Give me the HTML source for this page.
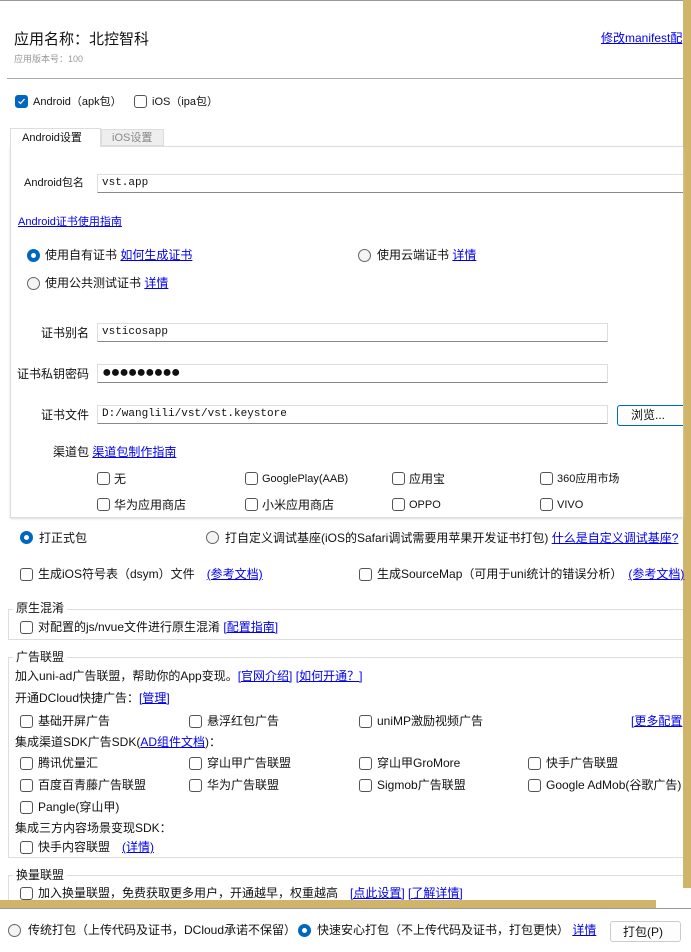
<!DOCTYPE html>
<html><head><meta charset="utf-8"><style>
*{margin:0;padding:0;box-sizing:border-box}
body{width:691px;height:952px;position:relative;overflow:hidden;background:#fff;font-family:"Liberation Sans","Noto Sans CJK SC",sans-serif;font-size:12px;color:#111}
.a{position:absolute;white-space:nowrap;line-height:14px}
a,.l{color:#0000ee;text-decoration:underline}
.cb{position:absolute;width:13px;height:13px;border:1px solid #555;border-radius:3px;background:#fff}
.cbc{background:#0067c0;border-color:#0067c0}
.rb{position:absolute;width:13px;height:13px;border:1px solid #666;border-radius:50%;background:#f4f4f4}
.rbc{border:4px solid #0067c0;background:#fff}
.in{position:absolute;height:19px;border:1px solid #ddd;border-bottom:1px solid #888;background:#fff;font-size:11px;padding-left:4px;line-height:17px;font-family:"Liberation Mono","Noto Sans CJK SC",monospace}
.fs{position:absolute;border:1px solid #ddd;border-right:none}
.lg{position:absolute;background:#fff;padding:0 3px;line-height:14px}
</style></head><body>
<div style="position:absolute;left:0;top:0;width:691px;height:1px;background:#999"></div>
<div style="position:absolute;left:683px;top:0;width:8px;height:888px;background:#d0b46a"></div>

<div class="a" style="left:14px;top:31px;font-size:15px;line-height:18px">应用名称：北控智科</div>
<div class="a" style="left:14px;top:52px;font-size:9px;color:#999">应用版本号：100</div>
<div class="a l" style="left:601px;top:31px;font-size:12px">修改manifest配</div>
<div style="position:absolute;left:7px;top:78px;width:676px;height:1px;background:#aaa"></div>

<div class="cb cbc" style="left:15px;top:95px"><svg width="11" height="11" style="position:absolute;left:0;top:0"><path d="M2.5 5.5l2 2 4-4.5" stroke="#fff" stroke-width="1.2" fill="none"/></svg></div>
<div class="a" style="left:33px;top:95px;font-size:11px">Android（apk包）</div>
<div class="cb" style="left:134px;top:95px"></div>
<div class="a" style="left:152px;top:95px;font-size:11px">iOS（ipa包）</div>

<div style="position:absolute;left:10px;top:128px;width:91px;height:19px;border:1px solid #ddd;border-bottom:none;background:#fff;z-index:2"></div>
<div class="a" style="left:22px;top:131px;z-index:3;font-size:11px">Android设置</div>
<div style="position:absolute;left:101px;top:129px;width:63px;height:17px;border:1px solid #ddd;background:#eee"></div>
<div class="a" style="left:112px;top:131px;color:#888;font-size:11px">iOS设置</div>
<div style="position:absolute;left:10px;top:146px;width:673px;height:372px;border:1px solid #ddd;border-right:none;box-shadow:0 1px 2px #ddd"></div>

<div class="a" style="left:24px;top:176px;font-size:11px">Android包名</div>
<div class="in" style="left:97px;top:174px;width:586px;border-right:none">vst.app</div>
<div class="a l" style="left:18px;top:215px;font-size:11px">Android证书使用指南</div>

<div class="rb rbc" style="left:27px;top:249px"></div>
<div class="a" style="left:45px;top:248px">使用自有证书 <a>如何生成证书</a></div>
<div class="rb" style="left:358px;top:249px"></div>
<div class="a" style="left:377px;top:248px">使用云端证书 <a>详情</a></div>
<div class="rb" style="left:27px;top:277px"></div>
<div class="a" style="left:45px;top:276px">使用公共测试证书 <a>详情</a></div>

<div class="a" style="left:41px;top:326px">证书别名</div>
<div class="in" style="left:97px;top:323px;width:511px">vsticosapp</div>
<div class="a" style="left:17px;top:367px">证书私钥密码</div>
<div class="in" style="left:97px;top:364px;width:511px;font-size:16px;line-height:17px;letter-spacing:-1px">●●●●●●●●●</div>
<div class="a" style="left:41px;top:408px">证书文件</div>
<div class="in" style="left:97px;top:405px;width:511px">D:/wanglili/vst/vst.keystore</div>
<div style="position:absolute;left:617px;top:405px;width:66px;height:21px;border:1px solid #0067c0;border-right:none;border-radius:3px 0 0 3px;background:#fdfdfd"></div>
<div class="a" style="left:631px;top:408px">浏览...</div>

<div class="a" style="left:53px;top:445px">渠道包 <a>渠道包制作指南</a></div>
<div class="cb" style="left:97px;top:472px"></div><div class="a" style="left:114px;top:472px">无</div>
<div class="cb" style="left:245px;top:472px"></div><div class="a" style="left:262px;top:472px;font-size:11px">GooglePlay(AAB)</div>
<div class="cb" style="left:392px;top:472px"></div><div class="a" style="left:409px;top:472px">应用宝</div>
<div class="cb" style="left:540px;top:472px"></div><div class="a" style="left:557px;top:472px;font-size:11px">360应用市场</div>
<div class="cb" style="left:97px;top:498px"></div><div class="a" style="left:114px;top:498px">华为应用商店</div>
<div class="cb" style="left:245px;top:498px"></div><div class="a" style="left:262px;top:498px">小米应用商店</div>
<div class="cb" style="left:392px;top:498px"></div><div class="a" style="left:409px;top:498px;font-size:11px">OPPO</div>
<div class="cb" style="left:540px;top:498px"></div><div class="a" style="left:557px;top:498px;font-size:11px">VIVO</div>

<div class="rb rbc" style="left:20px;top:531px"></div>
<div class="a" style="left:39px;top:531px">打正式包</div>
<div class="rb" style="left:206px;top:531px"></div>
<div class="a" style="left:225px;top:531px">打自定义调试基座(iOS的Safari调试需要用苹果开发证书打包) <a>什么是自定义调试基座?</a></div>

<div class="cb" style="left:20px;top:568px"></div>
<div class="a" style="left:38px;top:567px">生成iOS符号表（dsym）文件　<a>(参考文档)</a></div>
<div class="cb" style="left:359px;top:568px"></div>
<div class="a" style="left:377px;top:567px">生成SourceMap（可用于uni统计的错误分析）　<a>(参考文档)</a></div>

<div class="fs" style="left:8px;top:609px;width:675px;height:31px"></div>
<div class="lg" style="left:13px;top:601px">原生混淆</div>
<div class="cb" style="left:20px;top:621px"></div>
<div class="a" style="left:38px;top:620px">对配置的js/nvue文件进行原生混淆 <a>[配置指南]</a></div>

<div class="fs" style="left:8px;top:657px;width:675px;height:201px"></div>
<div class="lg" style="left:13px;top:650px">广告联盟</div>
<div class="a" style="left:15px;top:669px">加入uni-ad广告联盟，帮助你的App变现。<a>[官网介绍]</a> <a>[如何开通？]</a></div>
<div class="a" style="left:15px;top:691px">开通DCloud快捷广告：<a>[管理]</a></div>
<div class="cb" style="left:20px;top:715px"></div><div class="a" style="left:38px;top:714px">基础开屏广告</div>
<div class="cb" style="left:189px;top:715px"></div><div class="a" style="left:207px;top:714px">悬浮红包广告</div>
<div class="cb" style="left:359px;top:715px"></div><div class="a" style="left:377px;top:714px">uniMP激励视频广告</div>
<div class="a l" style="left:631px;top:714px">[更多配置</div>
<div class="a" style="left:15px;top:735px">集成渠道SDK广告SDK(<a>AD组件文档</a>)：</div>
<div class="cb" style="left:20px;top:757px"></div><div class="a" style="left:38px;top:756px">腾讯优量汇</div>
<div class="cb" style="left:189px;top:757px"></div><div class="a" style="left:207px;top:756px">穿山甲广告联盟</div>
<div class="cb" style="left:359px;top:757px"></div><div class="a" style="left:377px;top:756px">穿山甲GroMore</div>
<div class="cb" style="left:528px;top:757px"></div><div class="a" style="left:546px;top:756px">快手广告联盟</div>
<div class="cb" style="left:20px;top:779px"></div><div class="a" style="left:38px;top:778px">百度百青藤广告联盟</div>
<div class="cb" style="left:189px;top:779px"></div><div class="a" style="left:207px;top:778px">华为广告联盟</div>
<div class="cb" style="left:359px;top:779px"></div><div class="a" style="left:377px;top:778px">Sigmob广告联盟</div>
<div class="cb" style="left:528px;top:779px"></div><div class="a" style="left:546px;top:778px">Google AdMob(谷歌广告)</div>
<div class="cb" style="left:20px;top:801px"></div><div class="a" style="left:38px;top:800px">Pangle(穿山甲)</div>
<div class="a" style="left:15px;top:821px">集成三方内容场景变现SDK：</div>
<div class="cb" style="left:20px;top:841px"></div><div class="a" style="left:38px;top:840px">快手内容联盟　<a>(详情)</a></div>

<div class="fs" style="left:8px;top:875px;width:675px;height:40px"></div>
<div class="lg" style="left:13px;top:868px">换量联盟</div>
<div class="cb" style="left:20px;top:887px"></div>
<div class="a" style="left:38px;top:886px">加入换量联盟，免费获取更多用户，开通越早，权重越高　<a>[点此设置]</a> <a>[了解详情]</a></div>

<div style="position:absolute;left:0;top:900px;width:656px;height:8px;background:#d0b46a"></div>
<div style="position:absolute;left:0;top:908px;width:691px;height:44px;background:#fff;border-top:1px solid #999"></div>
<div class="rb" style="left:8px;top:924px"></div>
<div class="a" style="left:28px;top:923px">传统打包（上传代码及证书，DCloud承诺不保留）</div>
<div class="rb rbc" style="left:298px;top:924px"></div>
<div class="a" style="left:317px;top:923px">快速安心打包（不上传代码及证书，打包更快） <a>详情</a></div>
<div style="position:absolute;left:610px;top:921px;width:71px;height:21px;border:1px solid #ccc;border-radius:3px;background:#fdfdfd"></div>
<div class="a" style="left:623px;top:925px">打包(P)</div>
</body></html>
